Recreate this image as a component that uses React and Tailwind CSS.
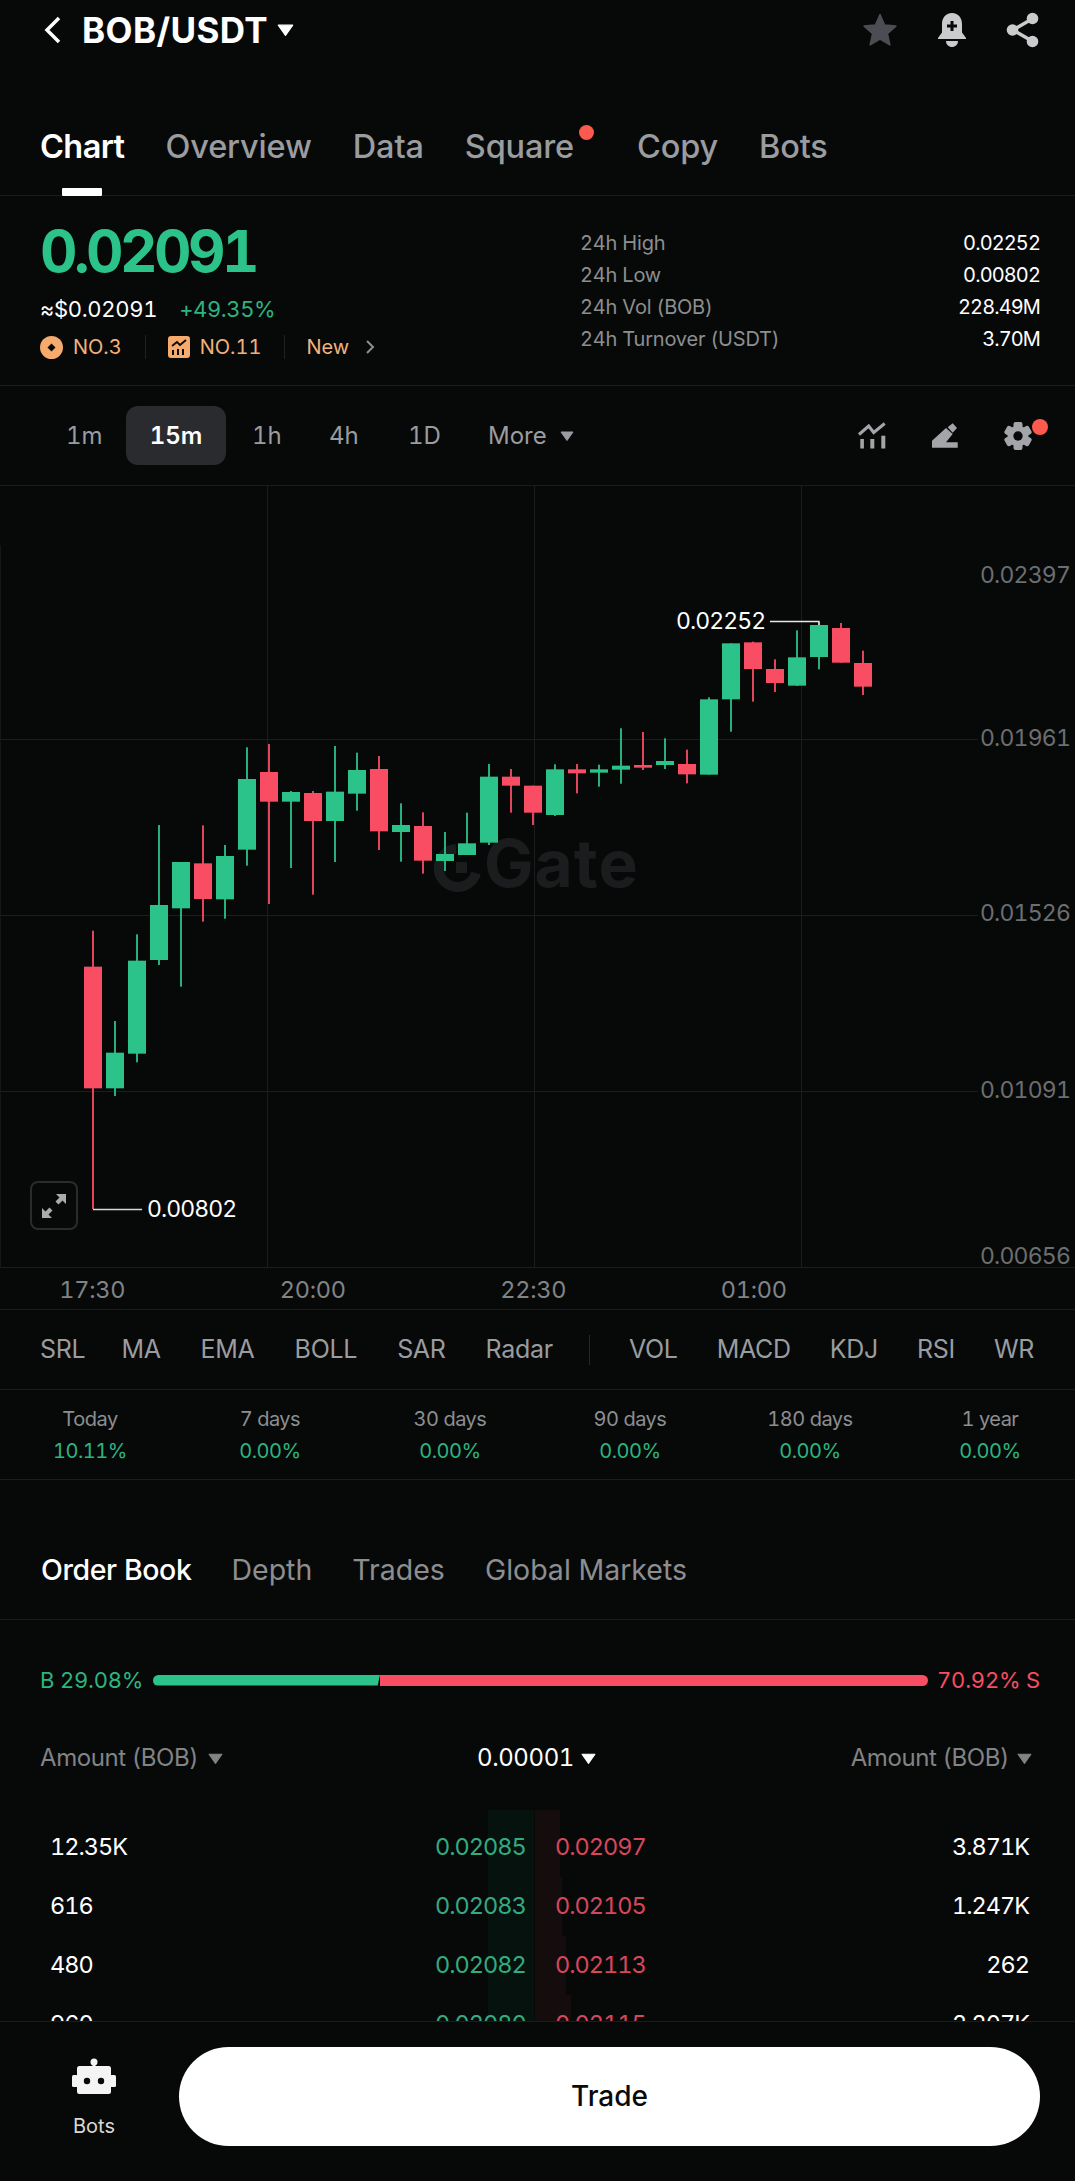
import React from "react";

const UP = "#2cc38b";
const DOWN = "#f94d64";

// [kind, wickTop, bodyTop, bodyBottom, wickBottom] in page pixels
const fromA = (k, a, b, c, d) => [k, 720 + a / 3, 720 + b / 3, 720 + c / 3, 720 + d / 3];
const fromB = (k, a, b, c, d) => [k, 590 + a / 3, 590 + b / 3, 590 + c / 3, 590 + d / 3];
const CANDLES = [
  fromA(0, 632, 740, 1105, 1467),
  fromA(1, 903, 998, 1105, 1128),
  fromA(1, 643, 722, 1001, 1027),
  fromA(1, 315, 555, 720, 735),
  fromA(1, 426, 426, 565, 800),
  fromA(0, 316, 430, 537, 605),
  fromA(1, 375, 408, 538, 596),
  fromA(1, 82, 177, 389, 437),
  fromA(0, 72, 156, 245, 552),
  fromA(1, 213, 216, 245, 444),
  fromA(0, 213, 219, 303, 524),
  fromA(1, 78, 215, 303, 426),
  fromA(1, 98, 150, 221, 272),
  fromA(0, 108, 147, 334, 390),
  fromA(1, 250, 315, 336, 425),
  fromA(0, 277, 318, 422, 461),
  fromA(1, 336, 402, 423, 453),
  fromB(1, 668, 760, 795, 795),
  fromB(1, 522, 560, 758, 765),
  fromB(0, 537, 560, 587, 668),
  fromB(0, 587, 587, 668, 705),
  fromB(1, 523, 538, 675, 678),
  fromB(0, 522, 538, 550, 610),
  fromB(1, 524, 538, 548, 590),
  fromB(1, 415, 527, 539, 581),
  fromB(0, 426, 525, 533, 540),
  fromB(1, 445, 513, 525, 537),
  fromB(0, 479, 522, 553, 580),
  fromB(1, 322, 328, 554, 554),
  fromB(1, 160, 160, 328, 425),
  fromB(0, 155, 157, 237, 335),
  fromB(0, 208, 237, 279, 306),
  fromB(1, 121, 202, 287, 288),
  fromB(1, 95, 105, 201, 238),
  fromB(0, 99, 114, 218, 218),
  fromB(0, 182, 219, 290, 315),
];

function Caret({ className = "", color = "#9a9c9e", w = 14, h = 10 }) {
  return (
    <svg width={w} height={h} viewBox="0 0 14 10" className={className}>
      <path d="M1 1h12L7 9.5z" fill={color} stroke={color} strokeLinejoin="round" />
    </svg>
  );
}

function Chart() {
  return (
    <svg width="1075" height="782" viewBox="0 486 1075 782" className="absolute left-0 top-0">
      {[267, 534, 801].map((x) => (
        <rect key={x} x={x} y="486" width="1" height="782" fill="#1b1c1d" />
      ))}
      <rect x="0" y="545" width="1" height="723" fill="#151617" />
      {[739, 915, 1091].map((y) => (
        <rect key={y} x="0" y={y} width="978" height="1" fill="#1c1d1e" />
      ))}
      <path d="M456 849a19 19 0 1 0 20 24" fill="none" stroke="#1b1c1d" strokeWidth="10" />
      <rect x="456" y="862" width="11" height="11" fill="#1b1c1d" />
      {CANDLES.map((c, i) => {
        const x = 93 + 22 * i;
        const fill = c[0] ? UP : DOWN;
        return (
          <g key={i} fill={fill}>
            <rect x={x - 0.9} y={c[1]} width="1.8" height={c[4] - c[1]} />
            <rect x={x - 9} y={c[2]} width="18" height={Math.max(c[3] - c[2], 2)} />
          </g>
        );
      })}
      <path d="M93 1209.5H142" fill="none" stroke="#d8d8d8" strokeWidth="1.3" />
      <path d="M770 621.5H819V625" fill="none" stroke="#e8e8e8" strokeWidth="1.3" />
    </svg>
  );
}

function Star() {
  return (
    <svg width="36" height="36" viewBox="0 0 36 36">
      <path
        d="M18 2.5 22.6 13l11.3 1.1-8.5 7.6 2.5 11.2L18 27l-9.9 5.9 2.5-11.2-8.5-7.6L13.4 13z"
        fill="#4b4d53"
        stroke="#4b4d53"
        strokeWidth="1.5"
        strokeLinejoin="round"
      />
    </svg>
  );
}

function Bell() {
  return (
    <svg width="32" height="36" viewBox="0 0 32 36">
      <path d="M16 1c-6.5 0-10 5-10 11v8.5L2 26v1h28v-1l-4-5.5V12c0-6-3.5-11-10-11z" fill="#c9cbcd" />
      <path d="M10 29h12c0 3.5-2.7 6-6 6s-6-2.5-6-6z" fill="#c9cbcd" />
      <path d="M16 9v10M11 14h10" stroke="#07090a" strokeWidth="3" />
    </svg>
  );
}

function Share() {
  return (
    <svg width="34" height="36" viewBox="0 0 34 36">
      <path d="M26 7 7 18l19 11" fill="none" stroke="#c9cbcd" strokeWidth="3.5" />
      <circle cx="26.5" cy="6.5" r="5.8" fill="#c9cbcd" />
      <circle cx="6.5" cy="18" r="5.8" fill="#c9cbcd" />
      <circle cx="26.5" cy="29.5" r="5.8" fill="#c9cbcd" />
    </svg>
  );
}

function ChartTool() {
  return (
    <svg width="28" height="28" viewBox="0 0 28 28" fill="#a3a5a8">
      <path d="M1 12.5 10.7 4 15.7 10.5 26.7 1.5" fill="none" stroke="#a3a5a8" strokeWidth="3" />
      <rect x="2.3" y="17" width="3.6" height="9.5" />
      <rect x="12.3" y="17" width="4" height="9.5" />
      <rect x="23.3" y="13.7" width="4" height="12.8" />
    </svg>
  );
}

function Pencil() {
  return (
    <svg width="28" height="28" viewBox="0 0 28 28" fill="#a3a5a8">
      <path d="M1 25.7V18.7L15 6l6.7 6L15 20.3h11.7v5.4z" />
      <path d="M16.7 5.3 21.7 1.3 26 6l-4.3 4.7z" />
    </svg>
  );
}

function Gear() {
  return (
    <svg width="28" height="30" viewBox="0 0 28 30">
      <g fill="#a3a5a8">
        <circle cx="14" cy="15" r="10.5" />
        {[0, 60, 120, 180, 240, 300].map((a) => (
          <rect key={a} x="9.5" y="1" width="9" height="6" rx="2" transform={`rotate(${a} 14 15)`} />
        ))}
      </g>
      <circle cx="14" cy="15" r="4.7" fill="#07090a" />
    </svg>
  );
}

function Robot() {
  return (
    <svg width="44" height="40" viewBox="0 0 44 40">
      <circle cx="22" cy="5" r="3.5" fill="#f4f4f4" />
      <rect x="20.5" y="5" width="3" height="6" fill="#f4f4f4" />
      <rect x="5" y="9" width="34" height="28" rx="2.5" fill="#f4f4f4" />
      <rect x="0" y="18" width="6" height="12" rx="1.5" fill="#f4f4f4" />
      <rect x="38" y="18" width="6" height="12" rx="1.5" fill="#f4f4f4" />
      <circle cx="15" cy="24" r="3.2" fill="#07090a" />
      <circle cx="29" cy="24" r="3.2" fill="#07090a" />
    </svg>
  );
}

const TABS = ["Overview", "Data", "Square", "Copy", "Bots"];
const STATS = [
  ["24h High", "0.02252"],
  ["24h Low", "0.00802"],
  ["24h Vol (BOB)", "228.49M"],
  ["24h Turnover (USDT)", "3.70M"],
];
const INDICATORS_A = ["SRL", "MA", "EMA", "BOLL", "SAR", "Radar"];
const INDICATORS_B = ["VOL", "MACD", "KDJ", "RSI", "WR"];
const RETURNS = [
  ["Today", "10.11%"],
  ["7 days", "0.00%"],
  ["30 days", "0.00%"],
  ["90 days", "0.00%"],
  ["180 days", "0.00%"],
  ["1 year", "0.00%"],
];
const BOOK = [
  ["12.35K", "0.02085", "0.02097", "3.871K"],
  ["616", "0.02083", "0.02105", "1.247K"],
  ["480", "0.02082", "0.02113", "262"],
  ["960", "0.02080", "0.02115", "2.207K"],
];

export default function App() {
  return (
    <div className="w-[1075px] h-[2181px] flex flex-col overflow-hidden bg-[#070909] text-white tabular-nums font-['Inter','Liberation_Sans',sans-serif]">
      <main className="flex-1 min-h-0 overflow-hidden">
        {/* Header */}
        <header className="h-[60px] flex items-center justify-between pl-[42px] pr-[35px]">
          <div className="flex items-center">
            <svg width="20" height="28" viewBox="0 0 20 28">
              <path d="M17 2 5 14l12 12" fill="none" stroke="#fff" strokeWidth="3.5" />
            </svg>
            <span className="ml-[20px] text-[35px] leading-[40px] font-bold tracking-[0.4px]">BOB/USDT</span>
            <Caret className="ml-[9px]" color="#fff" w={17} h={12} />
          </div>
          <div className="flex items-center gap-[38px]">
            <Star />
            <Bell />
            <Share />
          </div>
        </header>

        {/* Tabs */}
        <nav className="relative h-[136px] pt-[67px] pl-[40px] flex items-start gap-[41px] border-b border-[#1b1c1e] text-[32.5px] leading-[40px] font-medium text-[#9a9c9f] tracking-[-0.15px]">
          <span className="text-white font-semibold relative tracking-[-0.6px]">
            Chart
            <span className="absolute left-[22px] top-[61px] w-[40px] h-[8px] bg-white rounded-[1px]" />
          </span>
          {TABS.map((t) => (
            <span key={t} className={t === "Square" ? "relative mr-[22px]" : "relative"}>
              {t}
              {t === "Square" && (
                <span className="absolute -right-[20px] -top-[2px] w-[15px] h-[15px] rounded-full bg-[#fb5a4c]" />
              )}
            </span>
          ))}
        </nav>

        {/* Market summary */}
        <section className="h-[190px] flex justify-between pl-[40px] pr-[35px] border-b border-[#1b1c1e]">
          <div className="pt-[25px]">
            <div className="text-[58px] leading-[60px] font-bold tracking-[-3.5px] text-[#2cc38b]">0.02091</div>
            <div className="mt-[14px] flex items-center text-[22px] leading-[28px]">
              <span className="tracking-[-0.3px]">≈$0.02091</span>
              <span className="ml-[22px] text-[#2cb57f] tracking-[-0.4px]">+49.35%</span>
            </div>
            <div className="mt-[10px] flex items-center text-[20px] leading-[28px] text-[#f2b27c]">
              <svg width="23" height="23" viewBox="0 0 23 23">
                <circle cx="11.5" cy="11.5" r="11.5" fill="#f6aa6c" />
                <path d="M11.5 7.5l4 4-4 4-4-4z" fill="#07090a" />
              </svg>
              <span className="ml-[10px]">NO.3</span>
              <span className="ml-[23px] mr-[22px] w-px h-[24px] bg-[#202122]" />
              <svg width="22" height="22" viewBox="0 0 22 22">
                <rect width="22" height="22" rx="3" fill="#f6aa6c" />
                <path d="M4 10l5-4 3 3 6-5" fill="none" stroke="#07090a" strokeWidth="1.8" />
                <path d="M5 19v-5M10 19v-6M15 19v-6" stroke="#07090a" strokeWidth="2" />
              </svg>
              <span className="ml-[10px]">NO.11</span>
              <span className="ml-[23px] mr-[21px] w-px h-[24px] bg-[#202122]" />
              <span>New</span>
              <svg width="12" height="18" viewBox="0 0 12 18" className="ml-[16px]">
                <path d="M2 3l6 6-6 6" fill="none" stroke="#8c8e90" strokeWidth="2" />
              </svg>
            </div>
          </div>
          <div className="w-[460px] pt-[31px] text-[20px] leading-[32px] tracking-[-0.2px]">
            {STATS.map(([k, v]) => (
              <div key={k} className="flex justify-between">
                <span className="text-[#8c8e90]">{k}</span>
                <span className="text-white tracking-[-0.9px]">{v}</span>
              </div>
            ))}
          </div>
        </section>

        {/* Timeframes */}
        <section className="h-[100px] flex items-center justify-between pl-[66px] pr-[43px] border-b border-[#1b1c1e] text-[24px] leading-[30px] text-[#9a9c9f]">
          <div className="flex items-center">
            <span className="w-[34px]">1m</span>
            <span className="ml-[26px] w-[100px] h-[59px] rounded-[12px] bg-[#2a2b2e] text-white font-semibold flex items-center justify-center">
              15m
            </span>
            <span className="ml-[26px] w-[27px]">1h</span>
            <span className="ml-[50px] w-[29px]">4h</span>
            <span className="ml-[50px] w-[31px]">1D</span>
            <span className="ml-[49px]">More</span>
            <Caret className="ml-[13px]" color="#9a9c9f" />
          </div>
          <div className="relative flex items-center gap-[45px]">
            <ChartTool />
            <Pencil />
            <Gear />
            <span className="absolute -right-[16px] -top-[2px] w-[16px] h-[16px] rounded-full bg-[#fb5a4c]" />
          </div>
        </section>

        {/* Chart canvas */}
        <section className="relative h-[782px] border-b border-[#1b1c1e] overflow-hidden">
          <span className="absolute left-[484px] top-[342px] text-[66px] leading-[70px] font-bold text-[#1b1c1d] tracking-[1px]">
            Gate
          </span>
          <Chart />
          {[
            ["0.02397", 89],
            ["0.01961", 252],
            ["0.01526", 427],
            ["0.01091", 604],
            ["0.00656", 770],
          ].map(([v, cy]) => (
            <span
              key={v}
              className="absolute right-[5px] text-[23px] leading-[22px] text-[#6c6e70] tracking-[-0.8px]"
              style={{ top: cy - 11 }}
            >
              {v}
            </span>
          ))}
          <span className="absolute left-[676px] top-[121px] text-[23px] leading-[28px] text-white tracking-[-0.9px]">0.02252</span>
          <span className="absolute left-[147px] top-[709px] text-[23px] leading-[28px] text-white tracking-[-0.9px]">0.00802</span>
          <span className="absolute left-[30px] top-[695px] w-[48px] h-[49px] rounded-[8px] border-2 border-[#2a2b2d] flex items-center justify-center">
            <svg width="28" height="28" viewBox="0 0 28 28" fill="#a9abad">
              <path d="M16 2h10v10l-3.5-3.5-4 4-3-3 4-4z" />
              <path d="M12 26H2V16l3.5 3.5 4-4 3 3-4 4z" />
            </svg>
          </span>
        </section>

        {/* Time axis */}
        <div className="h-[42px] pt-[2px] border-b border-[#1b1c1e] text-[23.5px] text-[#818385]">
          <div className="h-full -ml-[18px] flex items-center">
            {["17:30", "20:00", "22:30", "01:00"].map((t) => (
              <span key={t} className="w-[220.5px] text-center tracking-[-0.3px]">
                {t}
              </span>
            ))}
          </div>
        </div>

        {/* Indicators */}
        <div className="h-[80px] pl-[40px] flex items-center border-b border-[#1b1c1e] text-[25px] text-[#9a9c9f] tracking-[-0.3px]">
          <div className="flex items-center gap-[40px]">
            {INDICATORS_A.map((t) => (
              <span key={t} className={t === "MA" ? "-ml-[4px]" : ""}>
                {t}
              </span>
            ))}
          </div>
          <span className="ml-[36px] mr-[39px] w-px h-[30px] bg-[#26272a]" />
          <div className="flex items-center gap-[39px]">
            {INDICATORS_B.map((t) => (
              <span key={t}>{t}</span>
            ))}
          </div>
        </div>

        {/* Returns */}
        <div className="h-[90px] w-[1075px] overflow-hidden border-b border-[#1b1c1e]">
          <div className="w-[1080px] pt-[13px] grid grid-cols-6 text-center text-[20px] leading-[32px] tracking-[-0.5px]">
            {RETURNS.map(([k, v]) => (
              <div key={k}>
                <div className="text-[#8c8e90]">{k}</div>
                <div className="text-[#2cb57f]">{v}</div>
              </div>
            ))}
          </div>
        </div>

        {/* Book tabs */}
        <div className="h-[140px] pb-[29px] pl-[41px] flex items-end gap-[40px] border-b border-[#1b1c1e] text-[28.5px] leading-[40px] text-[#8c8e90]">
          <span className="text-white font-medium tracking-[-0.4px]">Order Book</span>
          <span>Depth</span>
          <span>Trades</span>
          <span>Global Markets</span>
        </div>

        {/* Ratio */}
        <div className="mt-[46px] pr-[35px] pl-[40px] h-[28px] flex items-center text-[22px] leading-[28px] tracking-[-0.2px]">
          <span className="text-[#2cb57f] w-[113px]">B 29.08%</span>
          <div className="w-[775px] h-[11px] flex">
            <div className="w-[227px] h-full rounded-l-full bg-[#2cc38b] [clip-path:polygon(0_0,100%_0,99%_100%,0_100%)]" />
            <div className="w-[548px] h-full rounded-r-full bg-[#f94d64]" />
          </div>
          <span className="ml-auto text-[#f94d64]">70.92% S</span>
        </div>

        {/* Book heading */}
        <div className="mt-[49px] pl-[40px] pr-[43px] h-[30px] flex items-center text-[24px] leading-[30px] text-[#818385] tracking-[-0.4px]">
          <div className="w-[437px] flex items-center">
            Amount (BOB)
            <Caret className="ml-[10px]" color="#818385" w={15} h={11} />
          </div>
          <div className="flex items-center text-white">
            0.00001
            <Caret className="ml-[7px]" color="#fff" w={15} h={11} />
          </div>
          <div className="ml-auto flex items-center">
            Amount (BOB)
            <Caret className="ml-[8px]" color="#818385" w={15} h={11} />
          </div>
        </div>

        {/* Book rows */}
        <div className="relative mt-[37px] pt-[7px]">
          <div className="absolute left-[488px] top-0 w-[46px] h-[300px] bg-[#06120e]" />
          <div className="absolute left-[535px] top-0 w-[25px] h-[67px] bg-[#150d0d]" />
          <div className="absolute left-[535px] top-[67px] w-[27px] h-[59px] bg-[#150d0d]" />
          <div className="absolute left-[535px] top-[126px] w-[31px] h-[59px] bg-[#150d0d]" />
          <div className="absolute left-[535px] top-[185px] w-[36px] h-[59px] bg-[#150d0d]" />
          {BOOK.map(([a, b, c, d]) => (
            <div key={b} className="relative h-[59px] pl-[50px] pr-[46px] flex items-center text-[23.5px] tracking-[-1px]">
              <span className="w-[385px] text-white">{a}</span>
              <span className="w-[90px] text-[#35aa80]">{b}</span>
              <span className="ml-[30px] text-[#d5475c]">{c}</span>
              <span className="ml-auto text-white">{d}</span>
            </div>
          ))}
        </div>
      </main>

      {/* Footer */}
      <footer className="h-[160px] shrink-0 border-t border-[#1b1c1e] pl-[72px] pr-[35px] flex items-center bg-[#070909]">
        <div className="w-[44px] -mt-[7px] flex flex-col items-center">
          <Robot />
          <span className="mt-[16px] text-[20px] leading-[26px] text-[#d8d8d8] whitespace-nowrap">Bots</span>
        </div>
        <button className="ml-[63px] -mt-[11px] flex-1 h-[99px] rounded-full bg-white text-[#0a0a0a] text-[28px] font-medium">Trade</button>
      </footer>
    </div>
  );
}
